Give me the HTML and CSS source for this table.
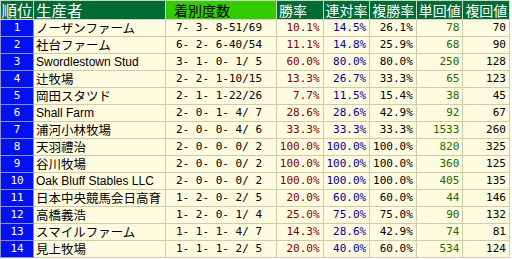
FILE: index.html
```html
<!DOCTYPE html>
<html lang="ja">
<head>
<meta charset="utf-8">
<title>生産者成績</title>
<link rel="stylesheet" href="styles.css">
</head>
<body>
<table class="stats">
  <colgroup>
    <col class="c-rank"><col class="c-name"><col class="c-rec"><col class="c-p"><col class="c-p"><col class="c-p"><col class="c-p"><col class="c-p">
  </colgroup>
  <thead>
    <tr>
      <th class="h-rank">順位</th>
      <th class="h-name">生産者</th>
      <th class="h-rec sorted">着別度数</th>
      <th class="h-p">勝率</th>
      <th class="h-p">連対率</th>
      <th class="h-p">複勝率</th>
      <th class="h-p">単回値</th>
      <th class="h-p">複回値</th>
    </tr>
  </thead>
  <tbody>
    <tr><td class="rank">1</td><td class="name">ノーザンファーム</td><td class="rec">7- 3- 8-51/69</td><td class="num win">10.1%</td><td class="num ren">14.5%</td><td class="num fuku">26.1%</td><td class="num tan">78</td><td class="num fk">70</td></tr>
    <tr><td class="rank">2</td><td class="name">社台ファーム</td><td class="rec">6- 2- 6-40/54</td><td class="num win">11.1%</td><td class="num ren">14.8%</td><td class="num fuku">25.9%</td><td class="num tan">68</td><td class="num fk">90</td></tr>
    <tr><td class="rank">3</td><td class="name lat">Swordlestown Stud</td><td class="rec">3- 1- 0- 1/ 5</td><td class="num win">60.0%</td><td class="num ren">80.0%</td><td class="num fuku">80.0%</td><td class="num tan">250</td><td class="num fk">128</td></tr>
    <tr><td class="rank">4</td><td class="name">辻牧場</td><td class="rec">2- 2- 1-10/15</td><td class="num win">13.3%</td><td class="num ren">26.7%</td><td class="num fuku">33.3%</td><td class="num tan">65</td><td class="num fk">123</td></tr>
    <tr><td class="rank">5</td><td class="name">岡田スタツド</td><td class="rec">2- 1- 1-22/26</td><td class="num win">7.7%</td><td class="num ren">11.5%</td><td class="num fuku">15.4%</td><td class="num tan">38</td><td class="num fk">45</td></tr>
    <tr><td class="rank">6</td><td class="name lat">Shall Farm</td><td class="rec">2- 0- 1- 4/ 7</td><td class="num win">28.6%</td><td class="num ren">28.6%</td><td class="num fuku">42.9%</td><td class="num tan">92</td><td class="num fk">67</td></tr>
    <tr><td class="rank">7</td><td class="name">浦河小林牧場</td><td class="rec">2- 0- 0- 4/ 6</td><td class="num win">33.3%</td><td class="num ren">33.3%</td><td class="num fuku">33.3%</td><td class="num tan">1533</td><td class="num fk">260</td></tr>
    <tr><td class="rank">8</td><td class="name">天羽禮治</td><td class="rec">2- 0- 0- 0/ 2</td><td class="num win">100.0%</td><td class="num ren">100.0%</td><td class="num fuku">100.0%</td><td class="num tan">820</td><td class="num fk">325</td></tr>
    <tr><td class="rank">9</td><td class="name">谷川牧場</td><td class="rec">2- 0- 0- 0/ 2</td><td class="num win">100.0%</td><td class="num ren">100.0%</td><td class="num fuku">100.0%</td><td class="num tan">360</td><td class="num fk">125</td></tr>
    <tr><td class="rank">10</td><td class="name lat">Oak Bluff Stables LLC</td><td class="rec">2- 0- 0- 0/ 2</td><td class="num win">100.0%</td><td class="num ren">100.0%</td><td class="num fuku">100.0%</td><td class="num tan">405</td><td class="num fk">135</td></tr>
    <tr><td class="rank">11</td><td class="name">日本中央競馬会日高育</td><td class="rec">1- 2- 0- 2/ 5</td><td class="num win">20.0%</td><td class="num ren">60.0%</td><td class="num fuku">60.0%</td><td class="num tan">44</td><td class="num fk">146</td></tr>
    <tr><td class="rank">12</td><td class="name">高橋義浩</td><td class="rec">1- 2- 0- 1/ 4</td><td class="num win">25.0%</td><td class="num ren">75.0%</td><td class="num fuku">75.0%</td><td class="num tan">90</td><td class="num fk">132</td></tr>
    <tr><td class="rank">13</td><td class="name">スマイルファーム</td><td class="rec">1- 1- 1- 4/ 7</td><td class="num win">14.3%</td><td class="num ren">28.6%</td><td class="num fuku">42.9%</td><td class="num tan">74</td><td class="num fk">81</td></tr>
    <tr><td class="rank">14</td><td class="name">見上牧場</td><td class="rec">1- 1- 1- 2/ 5</td><td class="num win">20.0%</td><td class="num ren">40.0%</td><td class="num fuku">60.0%</td><td class="num tan">534</td><td class="num fk">124</td></tr>
  </tbody>
</table>
</body>
</html>
```

FILE: styles.css
```css
html, body {
  margin: 0;
  padding: 0;
  background: #ffffff;
}

.stats {
  border-collapse: collapse;
  table-layout: fixed;
  width: 509px;
  font-family: "Noto Sans CJK JP", sans-serif;
}

.c-rank { width: 33px; }
.c-name { width: 132px; }
.c-rec { width: 111px; }
.c-p { width: 46.6px; }

.stats th {
  height: 18px;
  padding: 0 0 0 2px;
  background: #006b35;
  color: #ffffff;
  font-weight: normal;
  font-size: 14px;
  line-height: 18px;
  text-align: left;
  border: 1px solid #c9d7c0;
  white-space: nowrap;
  overflow: hidden;
}

.stats th.h-rank,
.stats th.h-name {
  font-size: 15.5px;
}

.stats th.h-rank {
  padding: 0;
  text-align: center;
}

.stats th.sorted {
  background: #33cc00;
  color: #000000;
  padding-left: 8px;
}

.stats td {
  height: 16px;
  padding: 0;
  background: #fffbe0;
  border: 1px solid #d2cba8;
  font-size: 11px;
  line-height: 16px;
  white-space: nowrap;
  overflow: hidden;
}

.stats td.rank {
  background: #0011ee;
  color: #ffffff;
  text-align: center;
  font-family: "DejaVu Sans Mono", monospace;
  border-color: #8a8fd8;
}

.stats td.name {
  font-size: 12.5px;
  padding-left: 2px;
  color: #000000;
}

.stats td.name.lat {
  font-family: "Liberation Sans", sans-serif;
  font-size: 12px;
}

.stats td.rec {
  font-family: "DejaVu Sans Mono", monospace;
  padding-left: 10px;
  color: #000000;
}

.stats td.num {
  font-family: "DejaVu Sans Mono", monospace;
  text-align: right;
  padding-right: 3px;
}

.num.win { color: #800000; }
.num.ren { color: #000099; }
.num.fuku { color: #000000; }
.num.tan { color: #1c6a00; }
.num.fk { color: #000000; }
```
